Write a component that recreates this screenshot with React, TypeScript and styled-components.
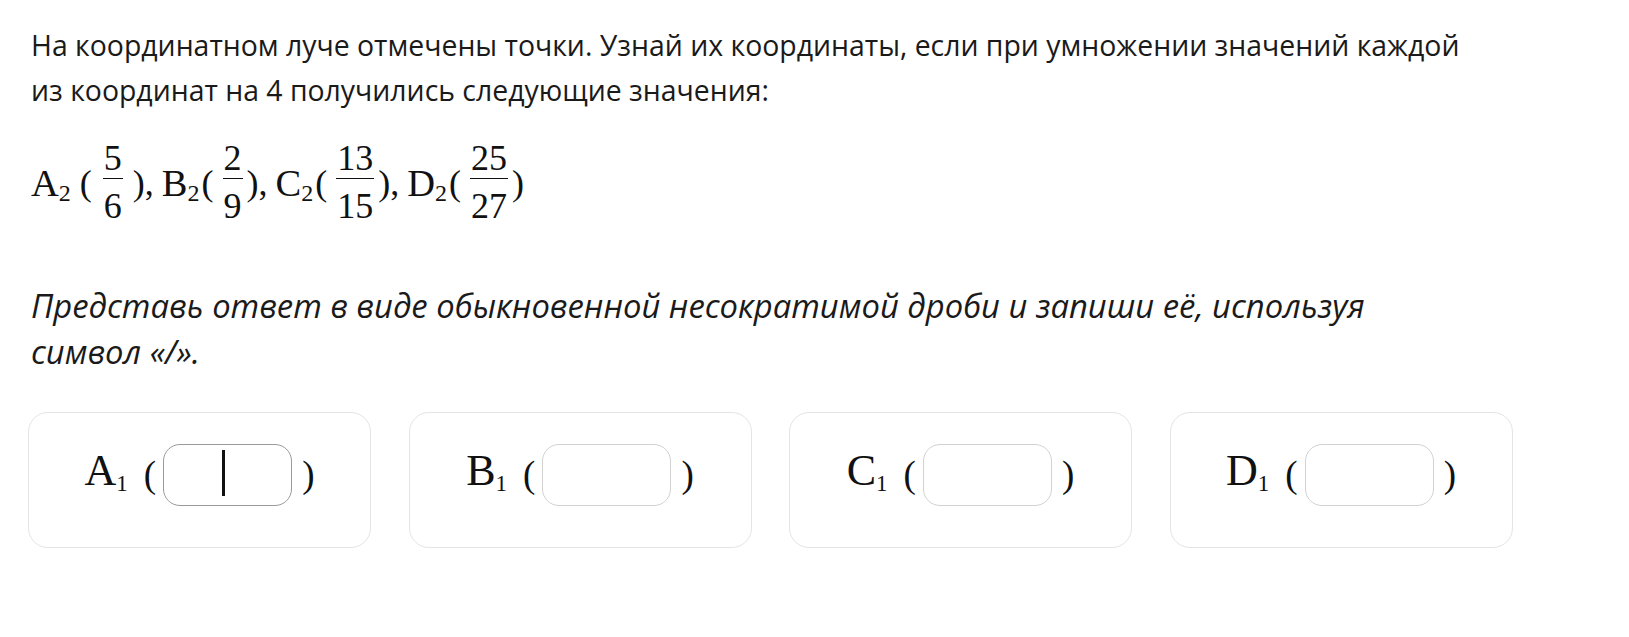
import React from "react";
import styled, { createGlobalStyle } from "styled-components";

const Global = createGlobalStyle`
  html, body { margin: 0; padding: 0; background: #ffffff; }
  body { font-family: "Open Sans", "Noto Sans", sans-serif; color: #1a1a1a; }
`;

const Page = styled.div`
  padding: 23px 31px 40px 31px;
`;

const Prompt = styled.p`
  margin: 0;
  font-family: "Open Sans", "Noto Sans", sans-serif;
  font-size: 28.4px;
  line-height: 45px;
  white-space: nowrap;
`;

const Hint = styled.p`
  margin: 60px 0 0 0;
  font-family: "Open Sans", "Noto Sans", sans-serif;
  font-style: italic;
  font-size: 32.8px;
  line-height: 46px;
  white-space: nowrap;
`;

const MathRow = styled.div`
  margin-top: 30px;
  display: flex;
  align-items: center;
  font-family: "Liberation Serif", "DejaVu Serif", serif;
  font-size: 36px;
  line-height: 1;
  height: 80px;
  color: #111;
`;

const Point = styled.span`
  display: inline-block;
  white-space: nowrap;
  font-size: 38.5px;
`;

const Sub = styled.span<{ $size: number; $drop: number }>`
  font-size: ${(p) => p.$size}px;
  vertical-align: -${(p) => p.$drop}px;
  line-height: 0;
`;

const Paren = styled.span<{ $ml?: number; $mr?: number }>`
  display: inline-block;
  margin-left: ${(p) => p.$ml ?? 0}px;
  margin-right: ${(p) => p.$mr ?? 0}px;
`;

const Frac = styled.span`
  display: inline-flex;
  flex-direction: column;
  align-items: stretch;
  font-size: 36px;
  line-height: 32px;
  text-align: center;
  margin-bottom: 3px;
`;

const Num = styled.span`
  display: block;
  padding: 0 1px 4px 1px;
`;

const Den = styled.span`
  display: block;
  padding: 11px 1px 0 1px;
  border-top: 1.3px solid #111;
`;

const Comma = styled.span`
  display: inline-block;
  margin-right: 8px;
`;

const Cards = styled.div`
  margin-top: 37px;
  margin-left: -3px;
  display: grid;
  grid-template-columns: repeat(4, 343px);
  column-gap: 37.5px;
`;

const Card = styled.div`
  box-sizing: border-box;
  height: 136px;
  border: 1px solid #e4e4e4;
  border-radius: 20px;
  padding-top: 31px;
  display: flex;
  justify-content: center;
  align-items: flex-start;
`;

const Entry = styled.div`
  display: flex;
  align-items: center;
  height: 62px;
  font-family: "Liberation Serif", "DejaVu Serif", serif;
  color: #111;
`;

const Label = styled.span`
  font-size: 44px;
  line-height: 1;
  padding-bottom: 8px;
  margin-right: 16px;
  white-space: nowrap;
`;

const BigParen = styled.span<{ $side: "l" | "r" }>`
  font-size: 37px;
  line-height: 1;
  padding-bottom: 2px;
  margin-left: ${(p) => (p.$side === "r" ? 10 : 0)}px;
  margin-right: ${(p) => (p.$side === "l" ? 7 : 0)}px;
`;

const Box = styled.div<{ $focused?: boolean }>`
  box-sizing: border-box;
  width: 129px;
  height: 62px;
  border-radius: 17px;
  border: 1.5px solid ${(p) => (p.$focused ? "#9a9a9a" : "#d2d2d2")};
  display: flex;
  align-items: center;
  justify-content: center;
`;

const Caret = styled.span`
  display: block;
  width: 3px;
  height: 46px;
  background: #111;
  margin-bottom: 4px;
  margin-right: 9px;
`;

const points = [
  { l: "A", n: "5", d: "6", spaced: true },
  { l: "B", n: "2", d: "9" },
  { l: "C", n: "13", d: "15" },
  { l: "D", n: "25", d: "27" },
];

export default function App() {
  return (
    <Page>
      <Global />
      <Prompt>
        На координатном луче отмечены точки. Узнай их координаты, если при умножении значений каждой
        <br />
        из координат на 4 получились следующие значения:
      </Prompt>
      <MathRow>
        {points.map((p, i) => (
          <React.Fragment key={p.l}>
            <Point>
              {p.l}
              <Sub $size={24} $drop={5}>2</Sub>
            </Point>
            <Paren $ml={p.spaced ? 9 : 2} $mr={p.spaced ? 11 : 9}>(</Paren>
            <Frac>
              <Num>{p.n}</Num>
              <Den>{p.d}</Den>
            </Frac>
            <Paren $ml={p.spaced ? 10 : 4}>)</Paren>
            {i < points.length - 1 && <Comma>,</Comma>}
          </React.Fragment>
        ))}
      </MathRow>
      <Hint>
        Представь ответ в виде обыкновенной несократимой дроби и запиши её, используя
        <br />
        символ «/».
      </Hint>
      <Cards>
        {points.map((p, i) => (
          <Card key={p.l}>
            <Entry>
              <Label>
                {p.l}
                <Sub $size={23} $drop={6}>1</Sub>
              </Label>
              <BigParen $side="l">(</BigParen>
              <Box $focused={i === 0}>{i === 0 && <Caret />}</Box>
              <BigParen $side="r">)</BigParen>
            </Entry>
          </Card>
        ))}
      </Cards>
    </Page>
  );
}
